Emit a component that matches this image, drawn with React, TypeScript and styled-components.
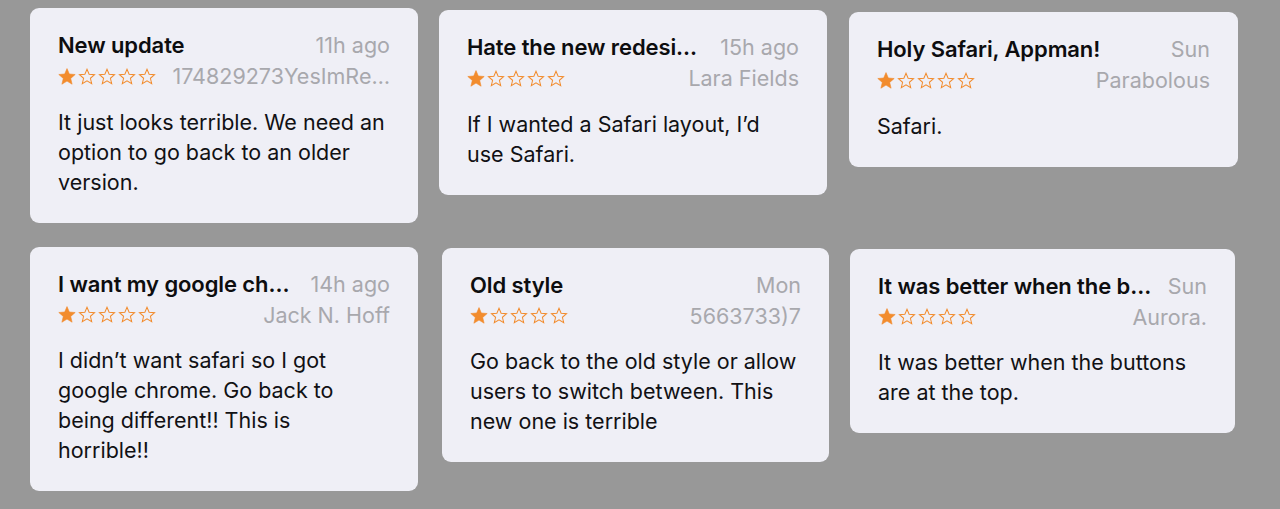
import React from "react";
import styled, { createGlobalStyle } from "styled-components";

const Global = createGlobalStyle`
  html, body { margin: 0; padding: 0; background: #989898; }
  body { font-family: Inter, "Noto Sans", "Liberation Sans", sans-serif; -webkit-font-smoothing: antialiased; }
`;

const Board = styled.main`
  width: 1280px;
  height: 509px;
  box-sizing: border-box;
  padding: 8px 0 0 30px;
  display: grid;
  grid-template-columns: repeat(3, 388px);
  grid-auto-rows: auto;
  align-content: start;
  justify-items: start;
  column-gap: 21px;
  row-gap: 24px;
  align-items: start;
  overflow: hidden;
`;

const Card = styled.article<{ $dx: number; $dy: number; $w: number }>`
  width: ${(p) => p.$w}px;
  margin-left: ${(p) => p.$dx}px;
  margin-top: ${(p) => p.$dy}px;
  background: #efeff6;
  border-radius: 9px;
  padding: 24px 28px 26px 28px;
  box-sizing: border-box;
  display: flex;
  flex-direction: column;
`;

const HeadRow = styled.div`
  display: flex;
  align-items: baseline;
  justify-content: space-between;
  gap: 16px;
  height: 26px;
  line-height: 26px;
`;

const Title = styled.h3`
  margin: 0;
  font-size: 22px;
  font-weight: 600;
  color: #0d0d0f;
  white-space: nowrap;
  letter-spacing: -0.1px;
`;

const Meta = styled.span`
  font-size: 21.5px;
  color: #a8a8ad;
  white-space: nowrap;
  overflow: hidden;
  text-overflow: ellipsis;
  flex-shrink: 1;
  min-width: 0;
  line-height: 26px;
`;

const StarRow = styled.div`
  display: flex;
  align-items: center;
  justify-content: space-between;
  gap: 14px;
  margin-top: 5px;
  height: 26px;
`;

const Stars = styled.div`
  display: flex;
  gap: 2px;
  flex-shrink: 0;
`;

const Body = styled.p`
  margin: 17.5px 0 0 0;
  padding-right: 4px;
  font-size: 21.5px;
  line-height: 30px;
  color: #111114;
`;

const STAR = "M9 0.6 L11.3 6.0 L17.2 6.5 L12.7 10.4 L14.1 16.2 L9 13.1 L3.9 16.2 L5.3 10.4 L0.8 6.5 L6.7 6.0 Z";

const Star = ({ filled }: { filled: boolean }) => (
  <svg width="18" height="17" viewBox="0 0 18 17">
    <path
      d={STAR}
      fill={filled ? "#f28c2e" : "none"}
      stroke="#f28c2e"
      strokeWidth={filled ? 0.6 : 1.1}
      strokeLinejoin="miter"
      transform={filled ? undefined : "translate(9 8.6) scale(0.92) translate(-9 -8.6)"}
    />
  </svg>
);

type Review = {
  title: string;
  when: string;
  author: string;
  body: string;
  dx: number;
  dy: number;
  w: number;
};

const reviews: Review[] = [
  { title: "New update", when: "11h ago", author: "174829273YesImRe…", body: "It just looks terrible. We need an option to go back to an older version.", dx: 0, dy: 0, w: 388 },
  { title: "Hate the new redesi…", when: "15h ago", author: "Lara Fields", body: "If I wanted a Safari layout, I’d use Safari.", dx: 0, dy: 2, w: 388 },
  { title: "Holy Safari, Appman!", when: "Sun", author: "Parabolous", body: "Safari.", dx: 1, dy: 4, w: 389 },
  { title: "I want my google ch…", when: "14h ago", author: "Jack N. Hoff", body: "I didn’t want safari so I got google chrome. Go back to being different!! This is horrible!!", dx: 0, dy: 0, w: 388 },
  { title: "Old style", when: "Mon", author: "5663733)7", body: "Go back to the old style or allow users to switch between. This new one is terrible", dx: 3, dy: 1, w: 387 },
  { title: "It was better when the b…", when: "Sun", author: "Aurora.", body: "It was better when the buttons are at the top.", dx: 2, dy: 2, w: 385 },
];

export default function App() {
  return (
    <>
      <Global />
      <Board>
        {reviews.map((r, i) => (
          <Card key={i} $dx={r.dx} $dy={r.dy} $w={r.w}>
            <HeadRow>
              <Title>{r.title}</Title>
              <Meta>{r.when}</Meta>
            </HeadRow>
            <StarRow>
              <Stars>
                {[0, 1, 2, 3, 4].map((s) => (
                  <Star key={s} filled={s === 0} />
                ))}
              </Stars>
              <Meta>{r.author}</Meta>
            </StarRow>
            <Body>{r.body}</Body>
          </Card>
        ))}
      </Board>
    </>
  );
}
